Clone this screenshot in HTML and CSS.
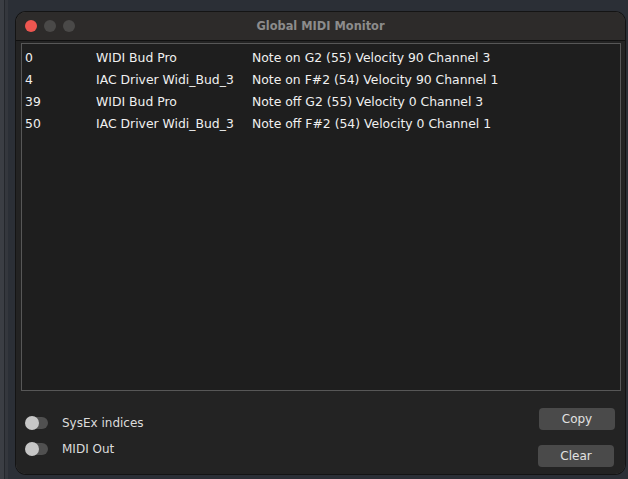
FILE: index.html
```html
<!DOCTYPE html>
<html>
<head>
<meta charset="utf-8">
<link rel="stylesheet" href="styles.css">
</head>
<body>
<div class="desk">
  <div class="side-strip"></div>
  <div class="window">
    <div class="titlebar">
      <div class="lights">
        <span class="light red"></span>
        <span class="light grey"></span>
        <span class="light grey"></span>
      </div>
      <div class="title">Global MIDI Monitor</div>
    </div>
    <div class="body">
      <div class="list">
        <div class="row"><span class="c1">0</span><span class="c2">WIDI Bud Pro</span><span class="c3">Note on G2 (55) Velocity 90 Channel 3</span></div>
        <div class="row"><span class="c1">4</span><span class="c2">IAC Driver Widi_Bud_3</span><span class="c3">Note on F#2 (54) Velocity 90 Channel 1</span></div>
        <div class="row"><span class="c1">39</span><span class="c2">WIDI Bud Pro</span><span class="c3">Note off G2 (55) Velocity 0 Channel 3</span></div>
        <div class="row"><span class="c1">50</span><span class="c2">IAC Driver Widi_Bud_3</span><span class="c3">Note off F#2 (54) Velocity 0 Channel 1</span></div>
      </div>
      <div class="footer">
        <div class="toggles">
          <div class="toggle-row"><span class="toggle"><span class="knob"></span></span><span class="tlabel">SysEx indices</span></div>
          <div class="toggle-row"><span class="toggle"><span class="knob"></span></span><span class="tlabel">MIDI Out</span></div>
        </div>
        <div class="buttons">
          <button class="btn copy">Copy</button>
          <button class="btn clear">Clear</button>
        </div>
      </div>
    </div>
  </div>
</div>
</body>
</html>
```
FILE: styles.css
```css
html, body {
  margin: 0;
  padding: 0;
  background: #2b2f36;
  width: 628px;
  height: 479px;
  overflow: hidden;
  font-family: "DejaVu Sans", sans-serif;
}
.desk {
  display: flex;
  height: 479px;
}
.side-strip {
  width: 8px;
  height: 100%;
  background: linear-gradient(to right, #3b3e44 0, #3b3e44 4px, #24272c 4px, #24272c 5px, #34373d 5px, #34373d 8px);
}
.window {
  margin: 12px 0 0 8px;
  width: 609px;
  height: 462px;
  background: #262626;
  border-radius: 10px;
  box-shadow: 0 0 0 1px #141414, inset 0 0 0 1px #444;
  display: flex;
  flex-direction: column;
  overflow: hidden;
}
.titlebar {
  height: 28px;
  flex: none;
  background: #2d2b2a;
  border-bottom: 1px solid #111;
  position: relative;
  display: flex;
  align-items: center;
}
.lights {
  display: flex;
  gap: 7px;
  padding-left: 9px;
}
.light {
  width: 12px;
  height: 12px;
  border-radius: 50%;
  display: block;
}
.light.red { background: #ee5650; }
.light.grey { background: #4a4948; }
.title {
  position: absolute;
  left: 0;
  right: 0;
  top: 0;
  line-height: 28px;
  text-align: center;
  color: #8c8c8c;
  font-weight: bold;
  font-size: 11.4px;
}
.body {
  flex: 1;
  display: flex;
  flex-direction: column;
  padding: 2px 4px 0 5px;
  background: #232323;
}
.list {
  border: 1px solid #575757;
  background: #1e1e1e;
  padding-top: 2px;
  box-sizing: border-box;
  height: 348px;
}
.row {
  display: flex;
  height: 22px;
  align-items: center;
  color: #f0f0f0;
  font-size: 12.4px;
  padding-left: 3px;
  white-space: nowrap;
}
.c1 { width: 71px; }
.c2 { width: 156px; }
.footer {
  flex: 1;
  display: flex;
  justify-content: space-between;
  padding: 17px 0 0 5px;
}
.toggles {
  display: flex;
  flex-direction: column;
  gap: 12px;
  padding-top: 8px;
}
.toggle-row {
  display: flex;
  align-items: center;
  height: 14px;
}
.toggle {
  position: relative;
  width: 22px;
  height: 12px;
  border-radius: 6px;
  background: #505050;
  display: block;
  margin-right: 14px;
}
.knob {
  position: absolute;
  left: -1px;
  top: -1px;
  width: 14px;
  height: 14px;
  border-radius: 50%;
  background: #c6c6c6;
}
.tlabel {
  color: #dcdcdc;
  font-size: 12px;
}
.buttons {
  display: flex;
  flex-direction: column;
  gap: 15px;
  align-items: flex-end;
  padding-right: 6px;
}
.btn {
  width: 76px;
  height: 22px;
  border: none;
  border-radius: 4px;
  background: #4a4a4a;
  color: #e2e2e2;
  font-family: "DejaVu Sans", sans-serif;
  font-size: 12px;
  padding: 0;
}
.btn.clear { margin-right: 1px; }
```
